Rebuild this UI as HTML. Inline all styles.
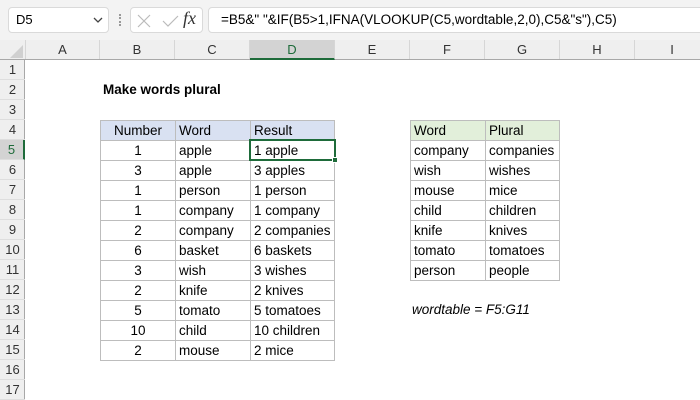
<!DOCTYPE html>
<html><head><meta charset="utf-8"><style>
*{margin:0;padding:0;box-sizing:border-box}
body{width:700px;height:400px;overflow:hidden;background:#fff;font-family:"Liberation Sans",Calibri,sans-serif;position:relative;color:#000}
.a{position:absolute}
.ch{position:absolute;top:40px;height:19px;text-align:center;font-size:13px;line-height:19px;color:#333;border-right:1px solid #d6d6d6}
.rh{position:absolute;left:0;width:25px;height:20px;text-align:center;font-size:13px;line-height:20px;color:#333;border-bottom:1px solid #dedede}
.c{position:absolute;height:21px;font-size:13.5px;line-height:20px;padding-left:3px;border:1px solid #bdbdbd;white-space:nowrap}
.r{text-align:center;padding-left:0}
</style></head><body>
<div class="a" style="left:0;top:0;width:700px;height:40px;background:#f3f3f3"></div>
<div class="a" style="left:8px;top:7px;width:101px;height:26px;background:#fff;border:1px solid #dadada;border-radius:4px;font-size:13px;line-height:24px;padding-left:7px">D5</div>
<svg class="a" style="left:93px;top:16px" width="10" height="8"><path d="M1 2 L5 6 L9 2" stroke="#444" stroke-width="1.3" fill="none"/></svg>
<div class="a" style="left:119px;top:14px;width:2px;height:12px;border-left:2px dotted #999"></div>
<div class="a" style="left:130px;top:7px;width:73px;height:26px;background:#fff;border:1px solid #dadada;border-radius:4px"></div>
<svg class="a" style="left:135px;top:12px" width="70" height="18"><path d="M3 3 L15 15 M15 3 L3 15" stroke="#bbb" stroke-width="1.2"/><path d="M28 9 L33 14 L43 4" stroke="#bbb" stroke-width="1.2" fill="none"/></svg>
<div class="a" style="left:183px;top:8px;font-family:'Liberation Serif',serif;font-style:italic;font-size:18px;color:#333">fx</div>
<div class="a" style="left:208px;top:7px;width:500px;height:26px;background:#fff;border:1px solid #dadada;border-radius:4px;font-size:13.5px;line-height:24px;padding-left:12px;white-space:nowrap">=B5&amp;" "&amp;IF(B5&gt;1,IFNA(VLOOKUP(C5,wordtable,2,0),C5&amp;"s"),C5)</div>
<div class="a" style="left:0;top:40px;width:700px;height:20px;background:#efefef;border-bottom:1px solid #a8a8a8"></div>
<svg class="a" style="left:8px;top:44px" width="16" height="15"><path d="M15 1 L15 14 L2 14 Z" fill="#d0d0d0"/></svg>
<div class="ch" style="left:25px;width:75px;border-left:1px solid #d6d6d6">A</div>
<div class="ch" style="left:100px;width:75px">B</div>
<div class="ch" style="left:175px;width:75px">C</div>
<div class="ch" style="left:250px;width:85px;background:#d3d3d3;color:#1e6b3a;border-bottom:2px solid #1e6b3a;height:20px">D</div>
<div class="ch" style="left:335px;width:75px">E</div>
<div class="ch" style="left:410px;width:75px">F</div>
<div class="ch" style="left:485px;width:75px">G</div>
<div class="ch" style="left:560px;width:75px">H</div>
<div class="ch" style="left:635px;width:75px">I</div>
<div class="a" style="left:0;top:60px;width:25px;height:340px;background:#efefef;border-right:1px solid #a8a8a8"></div>
<div class="rh" style="top:60px">1</div><div class="rh" style="top:80px">2</div><div class="rh" style="top:100px">3</div><div class="rh" style="top:120px">4</div>
<div class="rh" style="top:140px;background:#d3d3d3;color:#1e6b3a;border-right:2px solid #1e6b3a">5</div>
<div class="rh" style="top:160px">6</div><div class="rh" style="top:180px">7</div><div class="rh" style="top:200px">8</div><div class="rh" style="top:220px">9</div><div class="rh" style="top:240px">10</div><div class="rh" style="top:260px">11</div><div class="rh" style="top:280px">12</div><div class="rh" style="top:300px">13</div><div class="rh" style="top:320px">14</div><div class="rh" style="top:340px">15</div><div class="rh" style="top:360px">16</div><div class="rh" style="top:380px">17</div>
<div class="a" style="left:103px;top:81px;font-size:13.5px;font-weight:bold;line-height:18px">Make words plural</div>
<div class="c r" style="left:100px;top:120px;width:76px;background:#d9e1f2">Number</div>
<div class="c" style="left:175px;top:120px;width:76px;background:#d9e1f2">Word</div>
<div class="c" style="left:250px;top:120px;width:85px;background:#d9e1f2">Result</div>
<div class="c r" style="left:100px;top:140px;width:76px">1</div><div class="c" style="left:175px;top:140px;width:76px">apple</div><div class="c" style="left:250px;top:140px;width:85px">1 apple</div>
<div class="c r" style="left:100px;top:160px;width:76px">3</div><div class="c" style="left:175px;top:160px;width:76px">apple</div><div class="c" style="left:250px;top:160px;width:85px">3 apples</div>
<div class="c r" style="left:100px;top:180px;width:76px">1</div><div class="c" style="left:175px;top:180px;width:76px">person</div><div class="c" style="left:250px;top:180px;width:85px">1 person</div>
<div class="c r" style="left:100px;top:200px;width:76px">1</div><div class="c" style="left:175px;top:200px;width:76px">company</div><div class="c" style="left:250px;top:200px;width:85px">1 company</div>
<div class="c r" style="left:100px;top:220px;width:76px">2</div><div class="c" style="left:175px;top:220px;width:76px">company</div><div class="c" style="left:250px;top:220px;width:85px">2 companies</div>
<div class="c r" style="left:100px;top:240px;width:76px">6</div><div class="c" style="left:175px;top:240px;width:76px">basket</div><div class="c" style="left:250px;top:240px;width:85px">6 baskets</div>
<div class="c r" style="left:100px;top:260px;width:76px">3</div><div class="c" style="left:175px;top:260px;width:76px">wish</div><div class="c" style="left:250px;top:260px;width:85px">3 wishes</div>
<div class="c r" style="left:100px;top:280px;width:76px">2</div><div class="c" style="left:175px;top:280px;width:76px">knife</div><div class="c" style="left:250px;top:280px;width:85px">2 knives</div>
<div class="c r" style="left:100px;top:300px;width:76px">5</div><div class="c" style="left:175px;top:300px;width:76px">tomato</div><div class="c" style="left:250px;top:300px;width:85px">5 tomatoes</div>
<div class="c r" style="left:100px;top:320px;width:76px">10</div><div class="c" style="left:175px;top:320px;width:76px">child</div><div class="c" style="left:250px;top:320px;width:85px">10 children</div>
<div class="c r" style="left:100px;top:340px;width:76px">2</div><div class="c" style="left:175px;top:340px;width:76px">mouse</div><div class="c" style="left:250px;top:340px;width:85px">2 mice</div>
<div class="a" style="left:249px;top:139px;width:87px;height:22px;border:2px solid #1e6b3a"></div>
<div class="a" style="left:332px;top:157px;width:6px;height:6px;background:#1e6b3a;border:1px solid #fff"></div>
<div class="c" style="left:410px;top:120px;width:76px;background:#e2efda">Word</div><div class="c" style="left:485px;top:120px;width:75px;background:#e2efda">Plural</div>
<div class="c" style="left:410px;top:140px;width:76px">company</div><div class="c" style="left:485px;top:140px;width:75px">companies</div>
<div class="c" style="left:410px;top:160px;width:76px">wish</div><div class="c" style="left:485px;top:160px;width:75px">wishes</div>
<div class="c" style="left:410px;top:180px;width:76px">mouse</div><div class="c" style="left:485px;top:180px;width:75px">mice</div>
<div class="c" style="left:410px;top:200px;width:76px">child</div><div class="c" style="left:485px;top:200px;width:75px">children</div>
<div class="c" style="left:410px;top:220px;width:76px">knife</div><div class="c" style="left:485px;top:220px;width:75px">knives</div>
<div class="c" style="left:410px;top:240px;width:76px">tomato</div><div class="c" style="left:485px;top:240px;width:75px">tomatoes</div>
<div class="c" style="left:410px;top:260px;width:76px">person</div><div class="c" style="left:485px;top:260px;width:75px">people</div>
<div class="a" style="left:412px;top:301px;font-size:13.5px;font-style:italic;line-height:18px">wordtable = F5:G11</div>
</body></html>
